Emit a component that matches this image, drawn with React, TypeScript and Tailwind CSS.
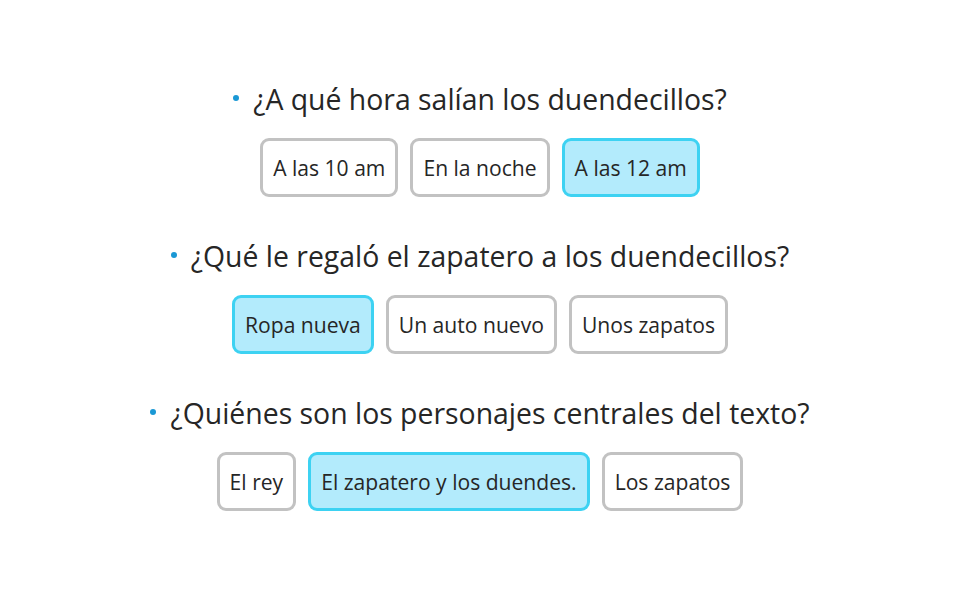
const questions = [
  {
    text: '¿A qué hora salían los duendecillos?',
    options: ['A las 10 am', 'En la noche', 'A las 12 am'],
    selected: 2,
  },
  {
    text: '¿Qué le regaló el zapatero a los duendecillos?',
    options: ['Ropa nueva', 'Un auto nuevo', 'Unos zapatos'],
    selected: 0,
  },
  {
    text: '¿Quiénes son los personajes centrales del texto?',
    options: ['El rey', 'El zapatero y los duendes.', 'Los zapatos'],
    selected: 1,
  },
];

export default function App() {
  return (
    <div
      className="min-h-[610px] w-[960px] bg-white flex flex-col items-center pt-[81px] text-[#262626]"
      style={{ fontFamily: '"Open Sans", "Noto Sans", sans-serif' }}
    >
      {questions.map((q, i) => (
        <div key={i} className="flex flex-col items-center mb-[41px]">
          <div className="flex items-center h-[36px] text-[28.4px] leading-[36px]">
            <span className="w-[6px] h-[6px] rounded-full bg-[#1a98d5] mr-[14px] -mt-[3px]" />
            <span>{q.text}</span>
          </div>
          <div className="flex gap-[12px] mt-[21px]">
            {q.options.map((opt, j) => (
              <div
                key={j}
                className={`h-[59px] flex items-center px-[10px] rounded-[9px] border-[3px] text-[21.1px] ${
                  j === q.selected ? 'border-[#3dd2f2] bg-[#b3ebfc]' : 'border-[#c2c2c2] bg-white'
                }`}
              >
                {opt}
              </div>
            ))}
          </div>
        </div>
      ))}
    </div>
  );
}
